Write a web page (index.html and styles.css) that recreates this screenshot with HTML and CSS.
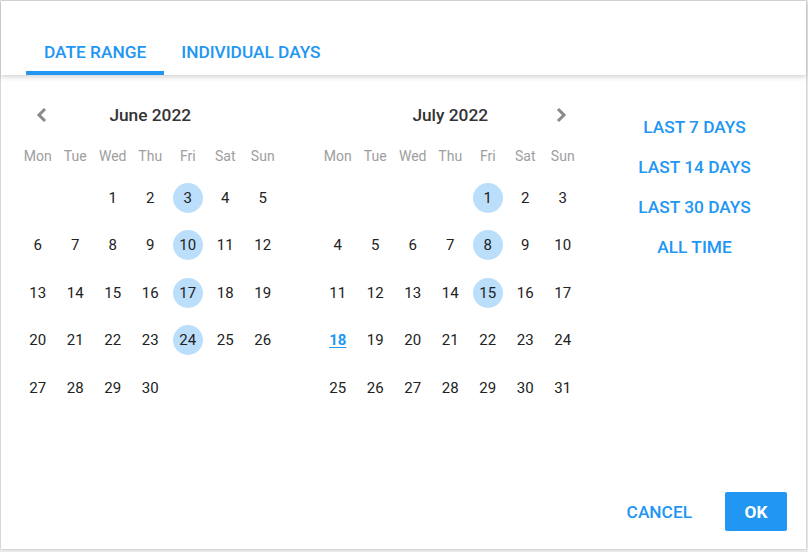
FILE: index.html
```html
<!DOCTYPE html>
<html lang="en">
<head>
  <meta charset="UTF-8">
  <title>Select dates</title>
  <link rel="stylesheet" href="styles.css">
</head>
<body>
  <div class="dialog">
    <div class="tabs">
      <div class="tab active">DATE RANGE</div>
      <div class="tab">INDIVIDUAL DAYS</div>
    </div>

    <div class="dialog-body">
      <div class="month">
        <div class="month-head">
          <span class="arrow">
            <svg width="12" height="16" viewBox="0 0 12 16"><path d="M9 2 L3 8 L9 14" fill="none" stroke="#8a8a8a" stroke-width="3"/></svg>
          </span>
          <span class="month-title">June 2022</span>
          <span class="arrow"></span>
        </div>
        <div class="days">
          <span class="wd">Mon</span><span class="wd">Tue</span><span class="wd">Wed</span><span class="wd">Thu</span><span class="wd">Fri</span><span class="wd">Sat</span><span class="wd">Sun</span>
          <span></span><span></span>
          <span class="d">1</span><span class="d">2</span><span class="d sel">3</span><span class="d">4</span><span class="d">5</span>
          <span class="d">6</span><span class="d">7</span><span class="d">8</span><span class="d">9</span><span class="d sel">10</span><span class="d">11</span><span class="d">12</span>
          <span class="d">13</span><span class="d">14</span><span class="d">15</span><span class="d">16</span><span class="d sel">17</span><span class="d">18</span><span class="d">19</span>
          <span class="d">20</span><span class="d">21</span><span class="d">22</span><span class="d">23</span><span class="d sel">24</span><span class="d">25</span><span class="d">26</span>
          <span class="d">27</span><span class="d">28</span><span class="d">29</span><span class="d">30</span>
        </div>
      </div>

      <div class="month">
        <div class="month-head">
          <span class="arrow"></span>
          <span class="month-title">July 2022</span>
          <span class="arrow next">
            <svg width="12" height="16" viewBox="0 0 12 16"><path d="M3 2 L9 8 L3 14" fill="none" stroke="#8a8a8a" stroke-width="3"/></svg>
          </span>
        </div>
        <div class="days">
          <span class="wd">Mon</span><span class="wd">Tue</span><span class="wd">Wed</span><span class="wd">Thu</span><span class="wd">Fri</span><span class="wd">Sat</span><span class="wd">Sun</span>
          <span></span><span></span><span></span><span></span>
          <span class="d sel">1</span><span class="d">2</span><span class="d">3</span>
          <span class="d">4</span><span class="d">5</span><span class="d">6</span><span class="d">7</span><span class="d sel">8</span><span class="d">9</span><span class="d">10</span>
          <span class="d">11</span><span class="d">12</span><span class="d">13</span><span class="d">14</span><span class="d sel">15</span><span class="d">16</span><span class="d">17</span>
          <span class="d today">18</span><span class="d">19</span><span class="d">20</span><span class="d">21</span><span class="d">22</span><span class="d">23</span><span class="d">24</span>
          <span class="d">25</span><span class="d">26</span><span class="d">27</span><span class="d">28</span><span class="d">29</span><span class="d">30</span><span class="d">31</span>
        </div>
      </div>

      <div class="presets">
        <a href="#">LAST 7 DAYS</a>
        <a href="#">LAST 14 DAYS</a>
        <a href="#">LAST 30 DAYS</a>
        <a href="#">ALL TIME</a>
      </div>
    </div>

    <div class="dialog-footer">
      <button class="btn-text">CANCEL</button>
      <button class="btn-ok">OK</button>
    </div>
  </div>
</body>
</html>
```

FILE: styles.css
```css
* {
  margin: 0;
  padding: 0;
  box-sizing: border-box;
  font-family: 'Roboto', 'Liberation Sans', sans-serif;
}

body {
  background: #e9e9e9;
  width: 808px;
  height: 552px;
  overflow: hidden;
  padding: 1px 0 0 1px;
}

.dialog {
  background: #fff;
  width: 805px;
  height: 548px;
  display: flex;
  flex-direction: column;
  box-shadow: 0 0 2px rgba(0, 0, 0, 0.25);
}

.tabs {
  display: flex;
  height: 74px;
  padding-left: 25px;
  align-items: flex-end;
  box-shadow: 0 2px 5px rgba(0, 0, 0, 0.18);
  position: relative;
}

.tab {
  color: #2196f3;
  font-size: 17.3px;
  font-weight: 500;
  padding: 6px 18px 0;
  height: 48px;
  line-height: 38px;
  border-bottom: 4px solid transparent;
}

.tab + .tab {
  padding-left: 17px;
}

.tab.active {
  border-bottom-color: #2196f3;
}

.dialog-body {
  display: flex;
  padding: 20px 0 0 18px;
  flex: 1;
}

.month {
  width: 262.5px;
  margin-right: 37.5px;
}

.month-head {
  display: grid;
  grid-template-columns: 45px 1fr 45px;
  height: 40px;
  align-items: center;
  margin-bottom: 3px;
}

.arrow {
  display: flex;
  justify-content: center;
  align-items: center;
}

.arrow.next {
  padding-left: 3px;
}

.month-title {
  text-align: center;
  font-size: 17.3px;
  font-weight: 500;
  color: #333;
}

.days {
  display: grid;
  grid-template-columns: repeat(7, 37.5px);
  grid-auto-rows: 47.5px;
  grid-template-rows: 36px;
}

.wd {
  font-size: 14px;
  color: #9e9e9e;
  text-align: center;
  line-height: 36px;
}

.d {
  display: flex;
  align-items: center;
  justify-content: center;
  font-size: 15px;
  color: #222;
}

.sel {
  position: relative;
  z-index: 0;
}

.sel::before {
  content: "";
  position: absolute;
  width: 30px;
  height: 30px;
  border-radius: 50%;
  background: #bbdefb;
  z-index: -1;
}

.today {
  color: #2196f3;
  font-weight: 700;
  text-decoration: underline;
  text-underline-offset: 2px;
}

.presets {
  flex: 1;
  display: flex;
  flex-direction: column;
  align-items: center;
  padding-top: 12px;
  margin-left: -36px;
}

.presets a {
  color: #2196f3;
  font-size: 17.3px;
  font-weight: 500;
  text-decoration: none;
  line-height: 40px;
}

.dialog-footer {
  display: flex;
  justify-content: flex-end;
  align-items: center;
  padding: 0 19px 18px 0;
}

.btn-text {
  background: none;
  border: none;
  color: #2196f3;
  font-size: 17.3px;
  font-weight: 500;
  padding: 0 16px;
  height: 39px;
  margin-right: 17px;
  cursor: pointer;
}

.btn-ok {
  background: #2196f3;
  border: none;
  border-radius: 2px;
  color: #fff;
  font-size: 17.3px;
  font-weight: 700;
  width: 62px;
  height: 39px;
  cursor: pointer;
}
```
